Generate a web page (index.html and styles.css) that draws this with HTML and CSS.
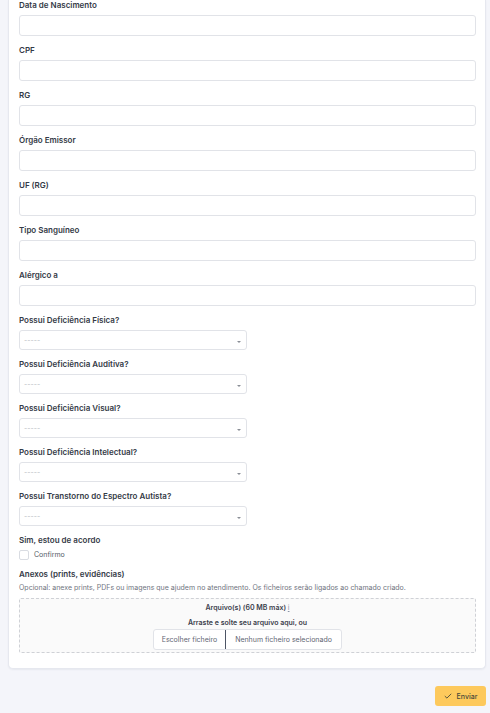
FILE: index.html
```html
<!DOCTYPE html>
<html lang="pt">
<head>
<meta charset="utf-8">
<link rel="stylesheet" href="styles.css">
</head>
<body>
<div class="card">
  <div class="field"><div class="label">Data de Nascimento</div><div class="input"></div></div>
  <div class="field"><div class="label">CPF</div><div class="input"></div></div>
  <div class="field"><div class="label">RG</div><div class="input"></div></div>
  <div class="field"><div class="label">Órgão Emissor</div><div class="input"></div></div>
  <div class="field"><div class="label">UF (RG)</div><div class="input"></div></div>
  <div class="field"><div class="label">Tipo Sanguíneo</div><div class="input"></div></div>
  <div class="field"><div class="label">Alérgico a</div><div class="input"></div></div>

  <div class="field"><div class="label">Possui Deficiência Física?</div><div class="select"><span>-----</span><i class="caret"></i></div></div>
  <div class="field"><div class="label">Possui Deficiência Auditiva?</div><div class="select"><span>-----</span><i class="caret"></i></div></div>
  <div class="field"><div class="label">Possui Deficiência Visual?</div><div class="select"><span>-----</span><i class="caret"></i></div></div>
  <div class="field"><div class="label">Possui Deficiência Intelectual?</div><div class="select"><span>-----</span><i class="caret"></i></div></div>
  <div class="field"><div class="label">Possui Transtorno do Espectro Autista?</div><div class="select"><span>-----</span><i class="caret"></i></div></div>

  <div class="field"><div class="label">Sim, estou de acordo</div>
    <div class="check-row"><span class="checkbox"></span><span class="check-text">Confirmo</span></div>
  </div>

  <div class="attach">
    <div class="label">Anexos (prints, evidências)</div>
    <div class="help">Opcional: anexe prints, PDFs ou imagens que ajudem no atendimento. Os ficheiros serão ligados ao chamado criado.</div>
    <div class="dropzone">
      <div class="dz-title">Arquivo(s) (60 MB máx) <span class="info">i</span></div>
      <div class="dz-text">Arraste e solte seu arquivo aqui, ou</div>
      <div class="file-input"><span class="file-btn">Escolher ficheiro</span><span class="file-name">Nenhum ficheiro selecionado</span></div>
    </div>
  </div>
</div>
<div class="actions">
  <button class="submit"><svg width="8" height="6" viewBox="0 0 8 6"><path d="M0.8 3.1 L2.9 5.1 L7.2 0.8" fill="none" stroke="#4a4a3a" stroke-width="0.9"/></svg>Enviar</button>
</div>
</body>
</html>
```

FILE: styles.css
```css
* { box-sizing: border-box; }
html, body { margin: 0; padding: 0; }
body {
  background: #f4f5fa;
  font-family: Inter, "Noto Sans", sans-serif;
  color: #333a45;
  width: 490px;
  height: 713px;
  overflow: hidden;
}
.card {
  margin: 0 4px 0 8px;
  background: #fff;
  border: 1px solid #e6e8ef;
  border-top: none;
  border-radius: 0 0 5px 5px;
  padding: 0 9px 15px 10px;
  box-shadow: 0 1px 2px rgba(20, 30, 60, 0.06);
}
.field { margin-bottom: 9px; }
.label {
  font-size: 8px;
  line-height: 10px;
  font-weight: 600;
  color: #343a46;
  margin-bottom: 5px;
  white-space: nowrap;
}
.input {
  height: 21px;
  border: 1px solid #e1e3e8;
  border-radius: 3px;
  background: #fff;
}
.select {
  width: 228px;
  height: 20px;
  border: 1px solid #e1e3e8;
  border-radius: 3px;
  display: flex;
  align-items: center;
  justify-content: space-between;
  padding: 0 5px 0 4px;
  font-size: 7px;
  color: #b9bcc3;
}
.caret {
  width: 0; height: 0;
  border-left: 2px solid transparent;
  border-right: 2px solid transparent;
  border-top: 2px solid #8a8e96;
  margin-top: 3px;
}
.check-row {
  display: flex;
  align-items: center;
  height: 11px;
  margin-top: -1px;
}
.checkbox {
  width: 10px; height: 10px;
  border: 1px solid #d9dce2;
  border-radius: 2px;
  background: #fff;
  margin-right: 5px;
}
.check-text { font-size: 7px; color: #555b66; }
.attach .label { margin-bottom: 4px; }
.help {
  font-size: 7px;
  line-height: 10px;
  color: #6f7480;
  white-space: nowrap;
  margin-bottom: 5px;
}
.dropzone {
  border: 1px dashed #cfd1d6;
  border-radius: 2px;
  background: #fafafa;
  height: 55px;
  display: flex;
  flex-direction: column;
  align-items: center;
  padding-top: 4px;
}
.dz-title {
  font-size: 7px;
  font-weight: 600;
  line-height: 10px;
  color: #3a404c;
}
.info { color: #8d96a8; text-decoration: underline; font-weight: 400; }
.dz-text {
  font-size: 7px;
  font-weight: 600;
  line-height: 10px;
  color: #3a404c;
  margin-top: 5px;
}
.file-input {
  display: flex;
  height: 21px;
  width: 189px;
  border: 1px solid #e1e3e8;
  border-radius: 3px;
  background: #fff;
  font-size: 7px;
  color: #5f6673;
  margin-top: 1px;
}
.file-btn {
  width: 72px;
  border-right: 1px solid #4d5565;
  display: flex; align-items: center; justify-content: center;
}
.file-name {
  flex: 1;
  display: flex; align-items: center; justify-content: center;
}
.actions {
  display: flex;
  justify-content: flex-end;
  padding: 17px 4px 0 0;
}
.submit {
  width: 51px;
  height: 20px;
  border: none;
  border-radius: 3px;
  background: #fdc95c;
  font-family: Inter, "Noto Sans", sans-serif;
  font-size: 7px;
  font-weight: 500;
  color: #4a4a3a;
  display: flex;
  align-items: center;
  justify-content: center;
  gap: 5px;
  padding: 0;
}
```
